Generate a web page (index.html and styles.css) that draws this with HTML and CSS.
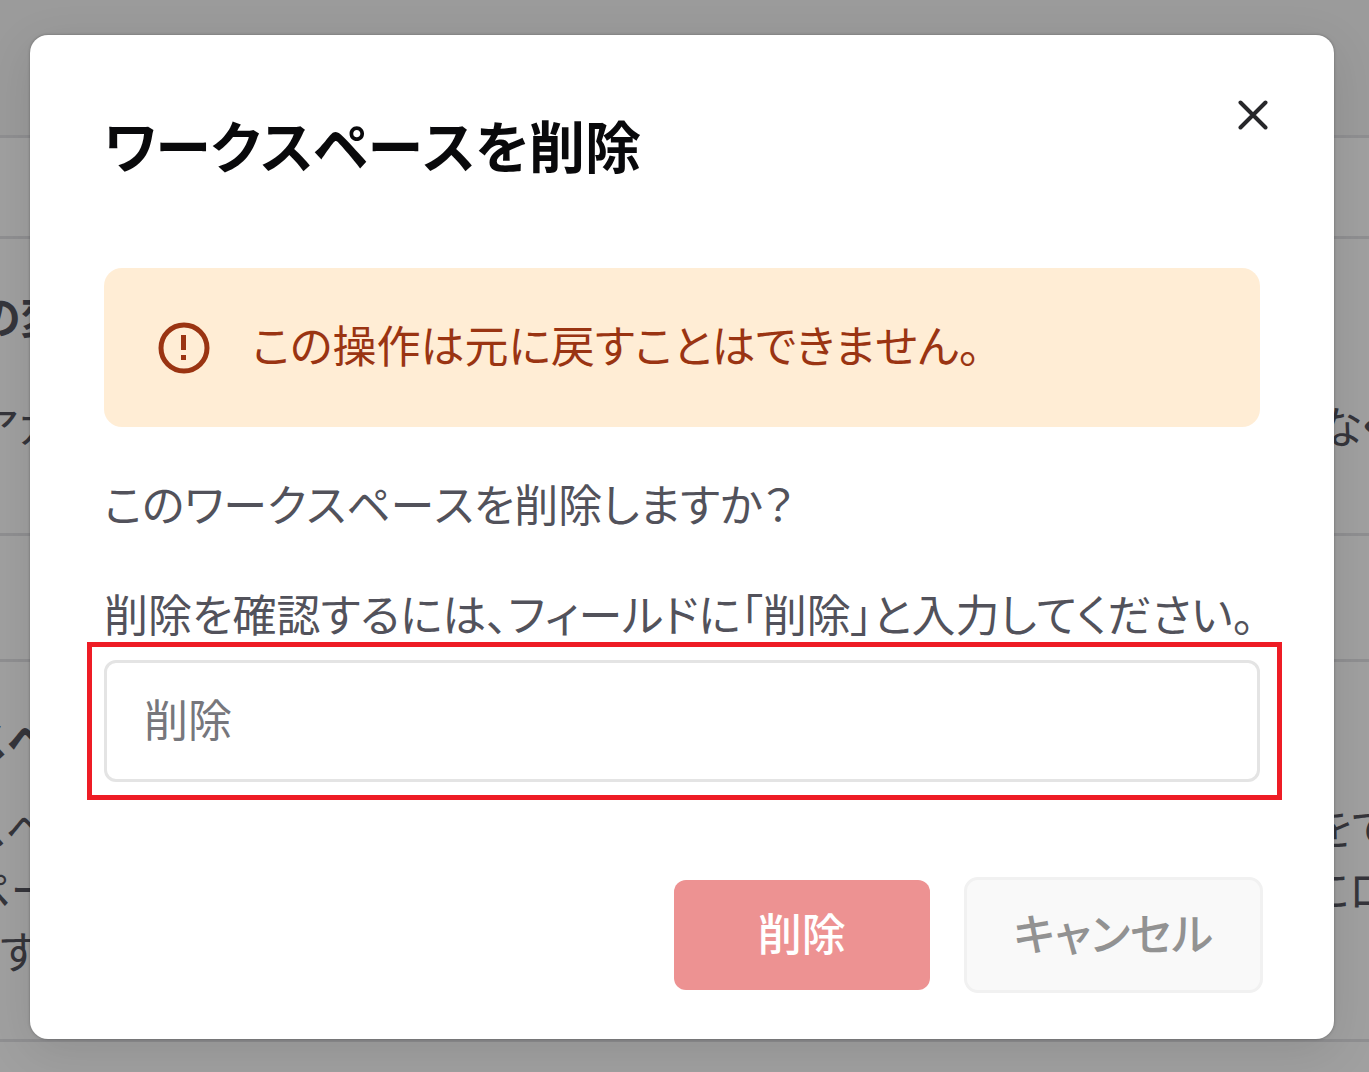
FILE: index.html
```html
<!DOCTYPE html>
<html lang="ja">
<head>
<meta charset="utf-8">
<meta name="viewport" content="width=device-width, initial-scale=1">
<title>ワークスペースを削除</title>
<link rel="stylesheet" href="styles.css">
</head>
<body>
<div class="page" aria-hidden="true">
  <div class="band band-header"></div>
  <div class="band band-tabs"></div>
  <section class="band band-account">
    <p class="line heading"><span>の変</span></p>
    <p class="line"><span>アカ</span><span>なく</span></p>
  </section>
  <div class="band band-gap"></div>
  <section class="band band-workspace">
    <p class="line heading"><span>スペ</span></p>
    <div>
      <p class="line"><span>スペ</span><span>をて</span></p>
      <p class="line"><span>ペー</span><span>にロ</span></p>
      <p class="line line-end"><span>す</span></p>
    </div>
  </section>
</div>
<div class="overlay">
  <form class="dialog" role="dialog" aria-modal="true" aria-labelledby="dialog-title">
    <header class="dialog-header">
      <h1 id="dialog-title">ワークスペースを削除</h1>
      <button class="close" type="button" aria-label="閉じる">
        <svg viewBox="0 0 30 30" width="30" height="30" fill="none" stroke="currentColor" stroke-width="4" stroke-linecap="round"><path d="M2.500 2.500 27.500 27.500M27.500 2.500 2.500 27.500"/></svg>
      </button>
    </header>
    <div class="alert" role="alert">
      <svg viewBox="0 0 52 52" width="52" height="52"><circle cx="26" cy="26" r="23" fill="none" stroke="currentColor" stroke-width="5"/><path fill="currentColor" d="M23 13h5v15h-5zM23 33h5v5h-5z"/></svg>
      <p>この操作は元に戻すことはできません。</p>
    </div>
    <p class="question">このワークスペースを削除しますか？</p>
    <label class="label" for="confirm">削除を確認するには、フィールドに「削除」と入力してください。</label>
    <div class="field"><input id="confirm" type="text" placeholder="削除"></div>
    <footer class="actions">
      <button class="button danger" type="submit">削除</button>
      <button class="button cancel" type="button">キャンセル</button>
    </footer>
  </form>
</div>
</body>
</html>
```
FILE: styles.css
```css
* { box-sizing: border-box; }

body {
  margin: 0;
  min-height: 100vh;
  overflow: hidden;
  background: #a0a0a0;
  color: #35353b;
  font: 44px/56px "Noto Sans CJK JP", sans-serif;
  font-feature-settings: "palt";
  font-kerning: none;
}

h1, p { margin: 0; }

button, input { font: inherit; font-feature-settings: inherit; font-kerning: inherit; }

.band { border-bottom: 3px solid #8f8f91; }
.band-header { height: 138px; background: #9b9b9b; }
.band-tabs { height: 101px; }
.band-account {
  display: flex;
  flex-direction: column;
  gap: 48px;
  padding: 48px 0 74px;
}
.band-gap { height: 126px; }
.band-workspace {
  display: flex;
  flex-direction: column;
  gap: 26px;
  padding: 48px 0 55px;
}

.line {
  display: flex;
  justify-content: space-between;
  margin: 0 -23px 0 -34px;
  padding-bottom: 6px;
  white-space: nowrap;
}
.band-account .line { margin-left: -23px; }
.line-end { padding-left: 34px; }
.heading { font-weight: 700; }

.overlay {
  position: absolute;
  inset: 0;
  padding: 35px 35px 33px 30px;
}

.dialog {
  padding: 65px 74px 46px;
  border-radius: 18px;
  background: #fff;
  color: #52525b;
  box-shadow: 0 0 3px rgba(0, 0, 0, .3), 0 12px 48px rgba(0, 0, 0, .1);
}

.dialog-header {
  display: flex;
  justify-content: space-between;
  align-items: flex-start;
  margin-right: -8px;
}
.dialog-header h1 {
  padding-top: 4px;
  color: #09090b;
  font-size: 56px;
  line-height: 80px;
}
.close {
  padding: 0;
  border: 0;
  background: none;
  color: #27272a;
  line-height: 0;
}

.alert {
  display: flex;
  align-items: center;
  gap: 42px;
  margin-top: 84px;
  padding: 48px 54px;
  border-radius: 18px;
  background: #ffedd5;
  color: #9a3412;
}
.alert p { padding-bottom: 7px; }

.question { margin-top: 48px; }
.label {
  display: block;
  margin-top: 54px;
  white-space: nowrap;
}

.field {
  position: relative;
  margin-top: 19px;
}
.field::after {
  content: "";
  position: absolute;
  inset: -18px -22px -18px -17px;
  border: 5px solid #ee1c25;
  pointer-events: none;
}
.field input {
  display: block;
  width: 100%;
  height: 122px;
  padding: 0 37px 6px;
  border: 3px solid #e4e4e4;
  border-radius: 12px;
  background: #fff;
}
.field input::placeholder { color: #77777c; opacity: 1; }

.actions {
  display: flex;
  justify-content: flex-end;
  align-items: center;
  gap: 34px;
  margin: 95px -3px 0 0;
}
.button {
  border: 0;
  border-radius: 12px;
  font-weight: 500;
}
.danger {
  padding: 24px 84px 30px;
  background: #ed9292;
  color: #fff;
}
.cancel {
  padding: 24px 47px 30px;
  border: 3px solid #f1f1f1;
  border-radius: 14px;
  background: #f9f9f9;
  color: #929292;
}
```
